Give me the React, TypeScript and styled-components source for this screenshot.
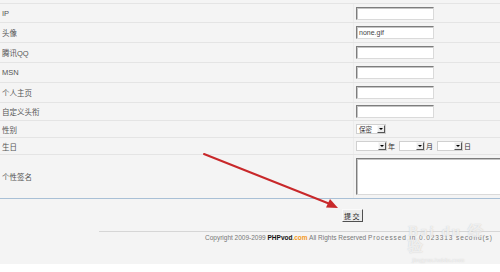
import styled, { createGlobalStyle } from "styled-components";

const GlobalStyle = createGlobalStyle`
  body {
    margin: 0;
    background: #ffffff;
    font-family: "Liberation Sans", "Noto Sans CJK SC", sans-serif;
  }
`;

const Page = styled.div`
  position: relative;
  width: 500px;
  height: 264px;
  background: #f4f4f4;
  overflow: hidden;
`;

const Form = styled.div`
  padding-top: 3px;
`;

const Row = styled.div<{ $h: number }>`
  display: flex;
  height: ${(p) => p.$h}px;
  box-sizing: border-box;
  border-top: 1px solid #e4e4e4;
`;

const Label = styled.div`
  width: 353px;
  flex-shrink: 0;
  padding-left: 2px;
  box-sizing: border-box;
  display: flex;
  align-items: center;
  font-size: 7.5px;
  color: #555;
`;

const Value = styled.div`
  flex: 1;
  display: flex;
  align-items: center;
  padding-left: 2px;
  border-left: 1px solid #ececec;
  font-size: 7px;
  color: #333;
  min-width: 0;
`;

const TextBox = styled.div`
  width: 78px;
  height: 13px;
  flex-shrink: 0;
  box-sizing: border-box;
  background: #fff;
  border: 1px solid;
  border-color: #7d7d7d #dadada #dadada #7d7d7d;
  box-shadow: inset 1px 1px 0 #c4c4c4;
  font-size: 7px;
  line-height: 11px;
  padding-left: 2px;
  color: #444;
`;

const TextArea = styled.div`
  width: 150px;
  height: 37px;
  flex-shrink: 0;
  box-sizing: border-box;
  background: #fff;
  border: 1px solid;
  border-color: #7d7d7d #dadada #dadada #7d7d7d;
  box-shadow: inset 1px 1px 0 #c4c4c4;
`;

const Select = styled.div<{ $w: number }>`
  width: ${(p) => p.$w}px;
  height: 10px;
  flex-shrink: 0;
  box-sizing: border-box;
  display: flex;
  align-items: center;
  background: #fff;
  border: 1px solid #d0d0d0;
  padding-left: 2px;
  font-size: 6.5px;
  color: #333;
`;

const Arrow = styled.span`
  width: 8px;
  height: 8px;
  margin-left: auto;
  box-sizing: border-box;
  display: flex;
  align-items: center;
  justify-content: center;
  background: #ececec;
  border: 1px solid;
  border-color: #f8f8f8 #555 #555 #f8f8f8;
  &::after {
    content: "";
    border-left: 2px solid transparent;
    border-right: 2px solid transparent;
    border-top: 2px solid #000;
  }
`;

const Unit = styled.span`
  font-size: 7px;
  color: #333;
  margin: 0 4px 0 1px;
`;

const ButtonBar = styled.div`
  height: 33px;
  box-sizing: border-box;
  border-top: 1px solid #a9c0d6;
  padding: 10px 0 0 342px;
`;

const Submit = styled.div`
  width: 21px;
  height: 13px;
  box-sizing: border-box;
  display: flex;
  align-items: center;
  justify-content: center;
  background: #ececec;
  border: 1px solid;
  border-color: #fafafa #505050 #505050 #fafafa;
  font-size: 7px;
  letter-spacing: 1.5px;
  color: #222;
`;

const Footer = styled.div`
  margin-left: 99px;
  border-top: 1px solid #d6d6d6;
  padding: 2px 0 0 106px;
  font-size: 6.5px;
  color: #777;
  white-space: nowrap;
`;

const Brand = styled.b`
  color: #111;
`;

const Dot = styled.b`
  color: #f39a1e;
`;

const Timing = styled.span`
  letter-spacing: 0.9px;
`;

const Watermark = styled.div`
  position: absolute;
  left: 408px;
  top: 224px;
  color: rgba(255, 255, 255, 0.7);
  font-family: "Liberation Serif", serif;
  line-height: 1;
  pointer-events: none;
`;

const WmBig = styled.div`
  font-size: 15px;
  font-weight: bold;
  letter-spacing: 2px;
  text-shadow: 0 0 1px rgba(150, 150, 150, 0.5);
`;

const WmSmall = styled.div`
  font-size: 7px;
  margin-top: 3px;
  padding-left: 4px;
  text-shadow: 0 0 1px rgba(150, 150, 150, 0.5);
`;

const Overlay = styled.svg`
  position: absolute;
  left: 0;
  top: 0;
  pointer-events: none;
`;

const rows: { label: string; h: number; value?: string }[] = [
  { label: "IP", h: 19 },
  { label: "头像", h: 20, value: "none.gif" },
  { label: "腾讯QQ", h: 20 },
  { label: "MSN", h: 20 },
  { label: "个人主页", h: 20 },
  { label: "自定义头衔", h: 18 },
];

export default function App() {
  return (
    <Page>
      <GlobalStyle />
      <Form>
        {rows.map((r) => (
          <Row key={r.label} $h={r.h}>
            <Label>{r.label}</Label>
            <Value>
              <TextBox>{r.value}</TextBox>
            </Value>
          </Row>
        ))}
        <Row $h={17}>
          <Label>性别</Label>
          <Value>
            <Select $w={30}>
              保密<Arrow />
            </Select>
          </Value>
        </Row>
        <Row $h={17}>
          <Label>生日</Label>
          <Value>
            <Select $w={31}>
              <Arrow />
            </Select>
            <Unit>年</Unit>
            <Select $w={26}>
              <Arrow />
            </Select>
            <Unit>月</Unit>
            <Select $w={26}>
              <Arrow />
            </Select>
            <Unit>日</Unit>
          </Value>
        </Row>
        <Row $h={44}>
          <Label>个性签名</Label>
          <Value>
            <TextArea />
          </Value>
        </Row>
      </Form>
      <ButtonBar>
        <Submit>提交</Submit>
      </ButtonBar>
      <Footer>
        Copyright 2009-2099 <Brand>PHPvod</Brand>
        <Dot>.com</Dot> All Rights Reserved <Timing>Processed in 0.023313 second(s)</Timing>
      </Footer>
      <Watermark>
        <WmBig>Bai du 经验</WmBig>
        <WmSmall>jingyan.baidu.com</WmSmall>
      </Watermark>
      <Overlay width="500" height="264">
        <line x1="204" y1="154" x2="330" y2="204" stroke="#c8282a" strokeWidth="2" strokeLinecap="round" />
        <polygon points="338,208 326,207.5 330,199" fill="#c8282a" />
      </Overlay>
    </Page>
  );
}
